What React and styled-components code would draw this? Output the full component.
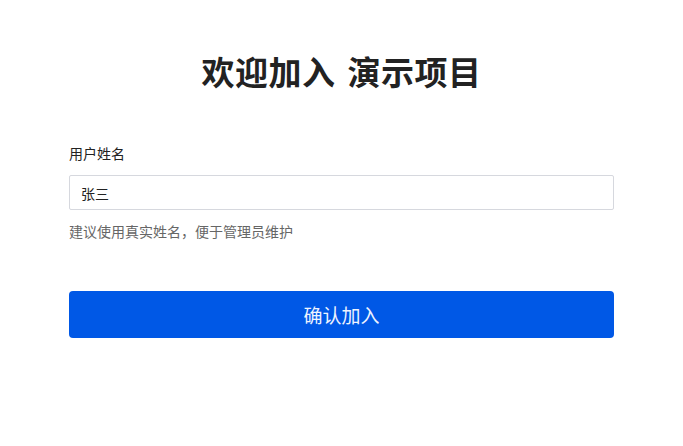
import styled, { createGlobalStyle } from 'styled-components';

const GlobalStyle = createGlobalStyle`
  html, body {
    margin: 0;
    padding: 0;
    background: #ffffff;
    font-family: "Noto Sans CJK SC", "Noto Sans", sans-serif;
  }
`;

const Page = styled.div`
  width: 545px;
  margin: 0 auto;
  padding-top: 49px;
`;

const Title = styled.h1`
  margin: 0;
  font-size: 33px;
  line-height: 44px;
  font-weight: 700;
  letter-spacing: 0.5px;
  word-spacing: 4px;
  color: #222222;
  text-align: center;
`;

const Field = styled.div`
  margin-top: 50px;
  display: flex;
  flex-direction: column;
`;

const Label = styled.label`
  font-size: 14px;
  line-height: 20px;
  color: #222222;
`;

const Input = styled.input`
  box-sizing: border-box;
  margin-top: 12px;
  width: 100%;
  height: 35px;
  padding: 0 11px;
  border: 1px solid #d6d8de;
  border-radius: 2px;
  font-family: inherit;
  font-size: 14px;
  color: #222222;
  outline: none;
`;

const Help = styled.div`
  margin-top: 11px;
  font-size: 14px;
  line-height: 20px;
  color: #666666;
`;

const Submit = styled.button`
  margin-top: 50px;
  width: 100%;
  height: 47px;
  border: none;
  border-radius: 4px;
  background: #0058e6;
  color: #eef3ff;
  font-family: inherit;
  font-size: 19px;
  cursor: pointer;
`;

const App = () => {
  return (
    <>
      <GlobalStyle />
      <Page>
        <Title>欢迎加入 演示项目</Title>
        <Field>
          <Label>用户姓名</Label>
          <Input defaultValue="张三" />
          <Help>建议使用真实姓名，便于管理员维护</Help>
        </Field>
        <Submit>确认加入</Submit>
      </Page>
    </>
  );
};

export default App;
